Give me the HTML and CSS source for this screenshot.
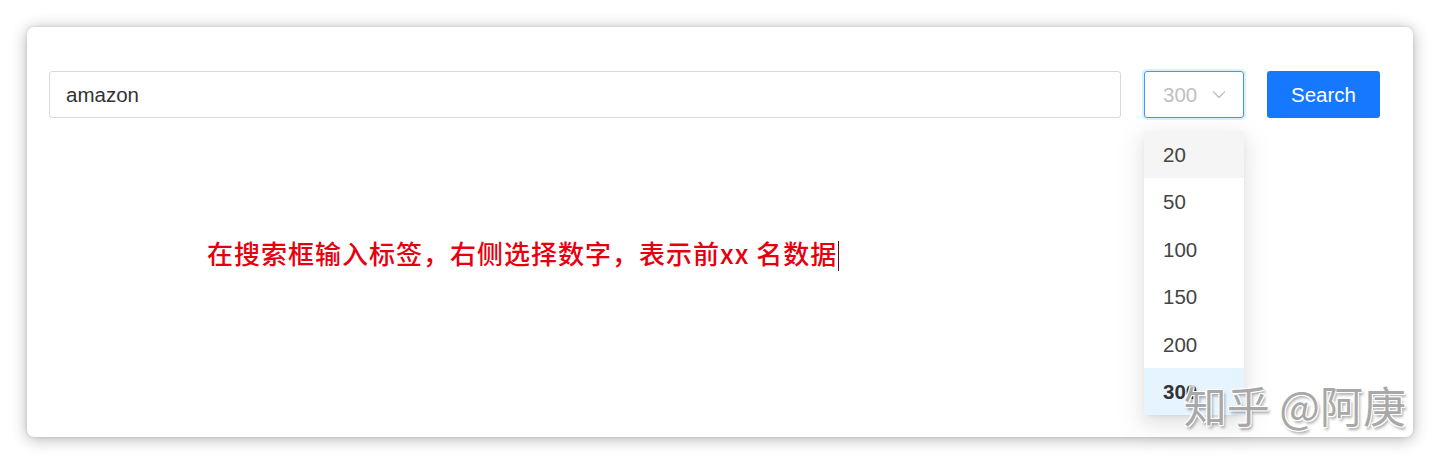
FILE: index.html
```html
<!DOCTYPE html>
<html lang="zh-CN">
<head>
  <meta charset="UTF-8" />
  <meta name="viewport" content="width=device-width, initial-scale=1.0"/>
  <title>Tag Search</title>
  <link rel="stylesheet" href="styles.css">
</head>
<body>
  <div class="card">
    <!-- Search row -->
    <div class="search-row">
      <input class="search-input" type="text" value="amazon">
      <div class="select">
        <div class="select-box">
          <span class="select-value">300</span>
          <svg class="select-arrow" width="14" height="9" viewBox="0 0 14 9">
            <path d="M1 1.5 L7 7.5 L13 1.5" fill="none" stroke="#bfbfbf" stroke-width="1.3"/>
          </svg>
        </div>
        <ul class="dropdown">
          <li class="option active">20</li>
          <li class="option">50</li>
          <li class="option">100</li>
          <li class="option">150</li>
          <li class="option">200</li>
          <li class="option selected">300</li>
        </ul>
      </div>
      <button class="search-btn" type="button">Search</button>
    </div>

    <!-- Note -->
    <p class="note">在搜索框输入标签，右侧选择数字，表示前xx 名数据<span class="caret"></span></p>

    <div class="watermark">知乎 @阿庚</div>
  </div>
</body>
</html>
```

FILE: styles.css
```css
:root {
  --primary-color: #1677ff;
  --border-color: #d9d9d9;
  --text-color: #333;
  --font-sans: 'Liberation Sans', 'Noto Sans CJK SC', Arial, sans-serif;
}

body {
  font-family: var(--font-sans);
  background-color: #fff;
  color: var(--text-color);
  margin: 0;
  padding: 27px;
}

.card {
  position: relative;
  box-sizing: border-box;
  width: 1386px;
  height: 410px;
  padding: 44px 33px 0 22px;
  background: #fff;
  border-radius: 7px;
  box-shadow: 0 2px 16px rgba(0, 0, 0, 0.3), 0 0 3px rgba(0, 0, 0, 0.14);
}

.search-row {
  display: flex;
  gap: 23px;
  height: 47px;
}

.search-input {
  flex: 1;
  box-sizing: border-box;
  height: 47px;
  padding: 0 16px;
  border: 1px solid var(--border-color);
  border-radius: 3px;
  font-family: var(--font-sans);
  font-size: 20.5px;
  color: var(--text-color);
  outline: none;
}

.select {
  position: relative;
  width: 100px;
}

.select-box {
  box-sizing: border-box;
  height: 47px;
  display: flex;
  align-items: center;
  justify-content: space-between;
  padding: 0 17px 0 18px;
  border: 1px solid #4096ff;
  border-radius: 3px;
  box-shadow: 0 0 0 2px rgba(5, 145, 255, 0.15);
}

.select-value {
  font-size: 20.5px;
  color: #bfbfbf;
}

.dropdown {
  position: absolute;
  top: 60px;
  left: 0;
  width: 100px;
  margin: 0;
  padding: 0;
  list-style: none;
  background: #fff;
  border-radius: 3px;
  box-shadow: 0 3px 6px -4px rgba(0, 0, 0, 0.12), 0 6px 16px rgba(0, 0, 0, 0.08), 0 9px 28px 8px rgba(0, 0, 0, 0.05);
  z-index: 2;
}

.option {
  height: 47.4px;
  line-height: 47.4px;
  padding-left: 19px;
  font-size: 20.5px;
  color: #444;
}

.option.active {
  background: #f5f5f5;
}

.option.selected {
  background: #e6f4ff;
  font-weight: 600;
  color: #333;
}

.search-btn {
  width: 113px;
  height: 47px;
  border: none;
  border-radius: 3px;
  background-color: var(--primary-color);
  color: #fff;
  font-family: var(--font-sans);
  font-size: 20.5px;
  cursor: pointer;
}

.note {
  margin: 118px 0 0 158px;
  line-height: 34px;
  font-family: 'Noto Sans CJK SC', sans-serif;
  font-size: 26px;
  font-weight: 500;
  letter-spacing: 1px;
  color: #e6000f;
}

.caret {
  display: inline-block;
  width: 0;
  height: 30px;
  margin-left: 1px;
  border-left: 1.5px solid #5a0a10;
  vertical-align: -7px;
}

.watermark {
  position: absolute;
  right: 7px;
  bottom: 2px;
  z-index: 3;
  font-family: 'Noto Sans CJK SC', sans-serif;
  font-size: 43px;
  color: #a8a8a8;
  text-shadow: 1px 1px 0 #fff, -1px -1px 0 #fff, 1px -1px 0 #fff, -1px 1px 0 #fff, 2px 3px 3px rgba(0, 0, 0, 0.35);
}
```
